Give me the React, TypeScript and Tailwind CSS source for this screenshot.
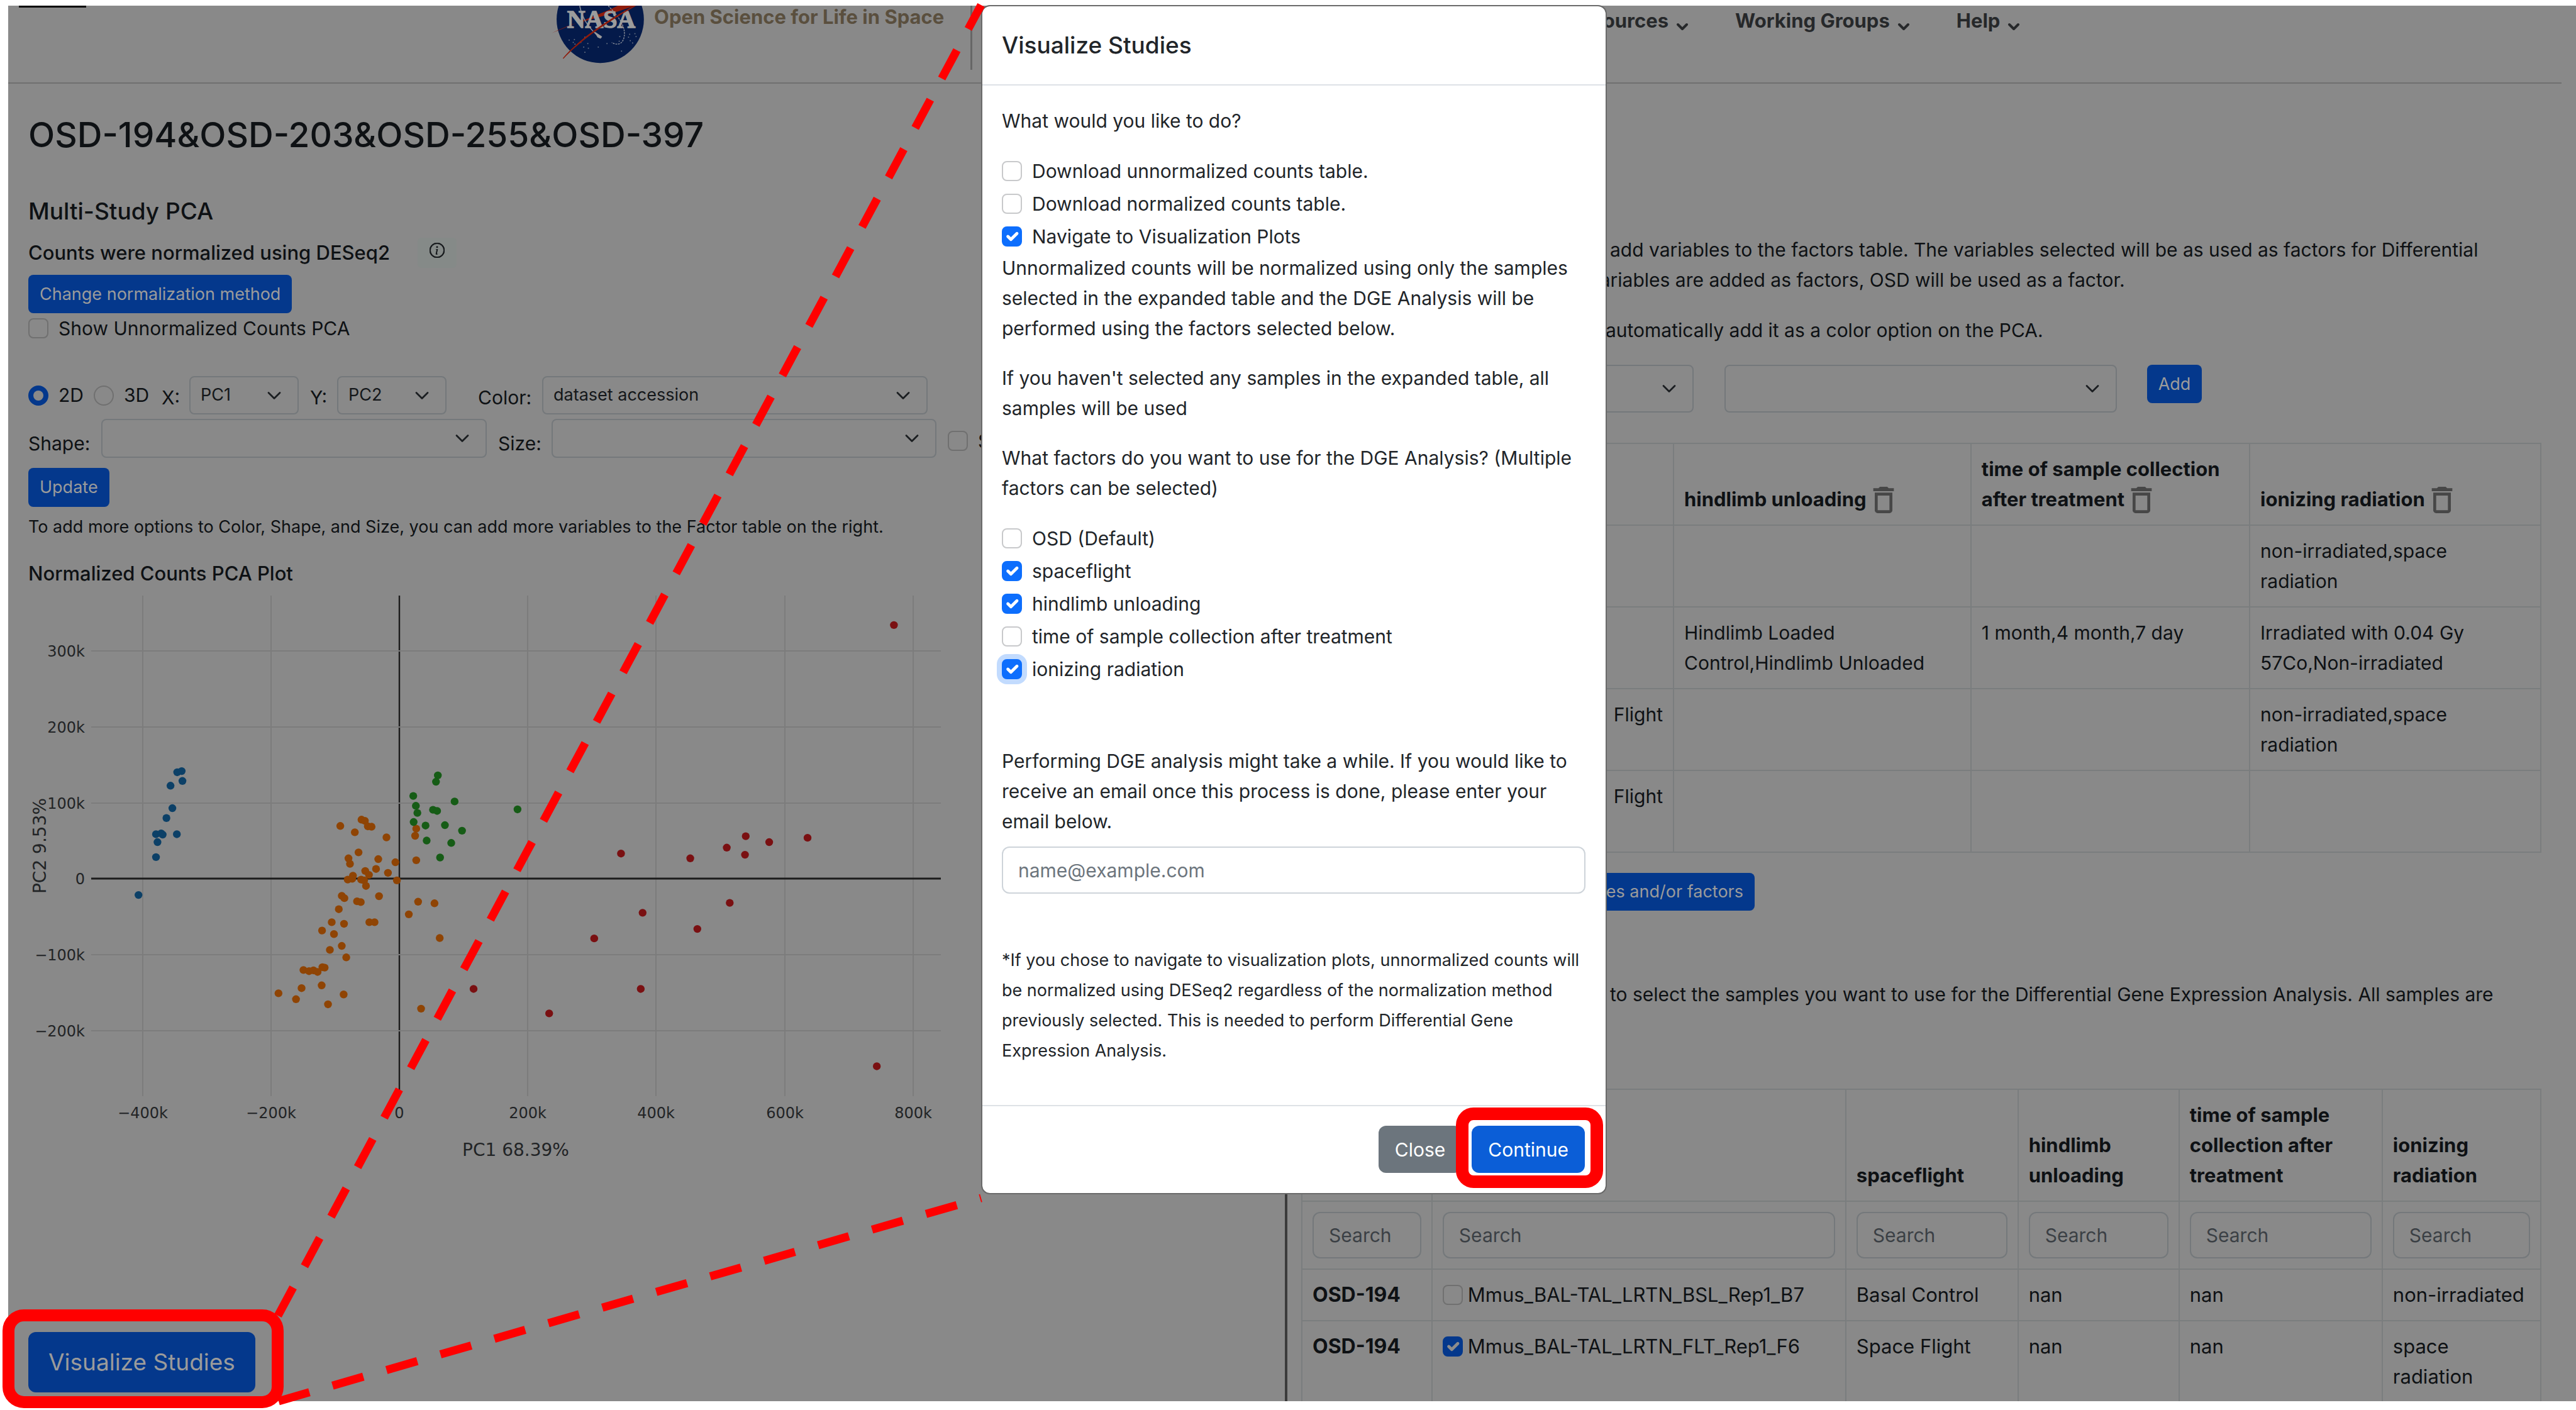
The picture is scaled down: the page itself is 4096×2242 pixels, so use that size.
import React from "react";

type Pt = [number, number];

const BLUE: Pt[] = [
  [476, 537], [488, 534], [490, 559], [458, 571], [463, 628], [447, 653], [419, 694], [433, 692],
  [437, 695], [475, 694], [423, 714], [419, 752], [372, 848],
];
const ORANGE: Pt[] = [
  [914, 673], [971, 657], [980, 660], [988, 674], [998, 675], [953, 689], [1038, 702], [963, 740],
  [936, 755], [940, 769], [1016, 757], [1062, 765], [1010, 782], [981, 787], [991, 797], [1042, 792],
  [948, 799], [934, 809], [946, 807], [970, 809], [978, 811], [1066, 811], [983, 825], [918, 850],
  [925, 856], [1018, 851], [959, 864], [969, 866], [910, 884], [891, 917], [924, 921], [992, 917],
  [1006, 917], [865, 938], [897, 947], [918, 977], [886, 987], [930, 1006], [872, 1032], [866, 1031],
  [815, 1038], [830, 1041], [842, 1039], [853, 1043], [864, 1077], [810, 1084], [748, 1097], [795, 1112],
  [923, 1100], [881, 1125], [1118, 680], [1115, 698], [1118, 760], [1123, 865], [1167, 869], [1098, 897],
  [1181, 957], [1131, 1136],
];
const GREEN: Pt[] = [
  [1176, 545], [1171, 561], [1110, 597], [1221, 611], [1117, 622], [1121, 640], [1163, 632], [1174, 635],
  [1390, 631], [1111, 663], [1143, 672], [1195, 671], [1241, 685], [1146, 710], [1212, 716], [1182, 753],
];
const RED: Pt[] = [
  [2401, 164], [2003, 699], [2169, 703], [2066, 714], [1952, 728], [2001, 746], [1668, 743], [1854, 755],
  [1726, 893], [1960, 868], [1873, 934], [1596, 958], [1721, 1086], [1475, 1148], [2355, 1282], [1272, 1086],
];
const SERIES: { name: string; fill: string; points: Pt[] }[] = [
  { name: "OSD-203", fill: "#8f4404", points: ORANGE },
  { name: "OSD-194", fill: "#0c4067", points: BLUE },
  { name: "OSD-255", fill: "#165c16", points: GREEN },
  { name: "OSD-397", fill: "#7a1012", points: RED },
];
const px = (u: number) => u * 0.592;
const py = (v: number) => 891 + v * 0.6275;

function PcaPlot() {
  const xs: [number, string][] = [
    [227, "−400k"], [431, "−200k"], [635, "0"], [839, "200k"], [1043, "400k"], [1248, "600k"], [1452, "800k"],
  ];
  const ys: [number, string][] = [
    [1035, "300k"], [1156, "200k"], [1277, "100k"], [1397, "0"], [1518, "−100k"], [1639, "−200k"],
  ];
  return (
    <svg viewBox="45 932 1500 936" className="block h-[936px] w-[1500px]" role="img" aria-label="PCA plot" fontFamily='"DejaVu Sans", sans-serif' fill="#222426">
      {xs.map(([x, t]) => (
        <g key={t}>
          <line x1={x} x2={x} y1="947" y2="1743" stroke={t === "0" ? "#1c1c1c" : "#7c7c7c"} strokeWidth={t === "0" ? 2.4 : 2} />
          <text x={x} y="1778" fontSize="24" textAnchor="middle">{t}</text>
        </g>
      ))}
      {ys.map(([y, t]) => (
        <g key={t}>
          <line x1="145" x2="1496" y1={y} y2={y} stroke={t === "0" ? "#1c1c1c" : "#7c7c7c"} strokeWidth={t === "0" ? 2.8 : 2} />
          <text x="135" y={y + 9} fontSize="24" textAnchor="end">{t}</text>
        </g>
      ))}
      {SERIES.map((s) => (
        <g key={s.name} fill={s.fill}>
          {s.points.map(([u, v]) => (
            <circle key={`${u}-${v}`} cx={px(u)} cy={py(v)} r="6.2" />
          ))}
        </g>
      ))}
      <text x="820" y="1838" fontSize="28" textAnchor="middle">PC1 68.39%</text>
      <text transform="translate(73 1345) rotate(-90)" fontSize="28" textAnchor="middle">PC2 9.53%</text>
    </svg>
  );
}

function Nasa() {
  return (
    <svg viewBox="0 0 200 120" className="block h-[111px] w-[186px]" role="img" aria-label="NASA">
      <defs>
        <clipPath id="top-edge"><rect x="0" y="9.6" width="200" height="110.4" /></clipPath>
      </defs>
      <g clipPath="url(#top-edge)">
        <circle cx="98.3" cy="33.3" r="75" fill="#041a4a" />
        <path d="M15 57 C55 40 105 22 130 9 L160 9 C130 20 90 32 61 39 C42 44 28 51 15 57Z" fill="#8f1c0c" />
        <path d="M63 10 C67 30 76 46 98 65" fill="none" stroke="#8d929c" strokeWidth="1.6" />
        <path d="M89 55 L101 63 L99 66 L94 64Z" fill="#9a9a9a" stroke="#9a9a9a" strokeWidth="1" />
        <path d="M112 10 C132 30 145 50 138 68 C134 78 124 77 118 73" fill="none" stroke="#8d929c" strokeWidth="1.5" strokeDasharray="3 1.5" />
        <g fill="#6c7586">
          {[[44, 68], [51, 72], [53, 67], [54, 75], [71, 63], [64, 72], [69, 80], [77, 82], [76, 74], [71, 89], [94, 80], [109, 74], [134, 87], [131, 62], [130, 70], [148, 58], [157, 57], [159, 62], [149, 69], [153, 73], [146, 63]].map(([x, y]) => (
            <rect key={`${x}-${y}`} x={x} y={y} width="1.8" height="1.8" />
          ))}
        </g>
      </g>
      <text x="100" y="48" textAnchor="middle" fontFamily='"Liberation Serif", serif' fontWeight="700" fontSize="43" fill="#9c9c9c" stroke="#9c9c9c" strokeWidth="1.6">NASA</text>
      <path d="M35 101 C60 74 100 44 160 10 L156 10 C100 40 60 70 34 100Z" fill="#8f1c0c" />
    </svg>
  );
}

function Chevron({ className }: { className: string }) {
  return (
    <svg viewBox="0 0 22 13" className={className} fill="none" stroke="#1b1e21" strokeWidth="2.8" strokeLinecap="round" strokeLinejoin="round" aria-hidden="true">
      <path d="M2 2 L11 11 L20 2" />
    </svg>
  );
}

function Select({ label, value, className }: { label: string; value?: string; className: string }) {
  return (
    <span className={`relative block shrink-0 ${className}`}>
      <select aria-label={label} className="h-full w-full appearance-none rounded-[8px] border-2 border-[#74787b] bg-transparent pl-4 text-[27px] text-[#14171a]">
        <option>{value ?? ""}</option>
      </select>
      <Chevron className="pointer-events-none absolute top-1/2 right-[28px] h-[13px] w-[22px] -translate-y-1/2" />
    </span>
  );
}

function Tick({ id, checked, dim, focus, label, radio }: { id: string; checked?: boolean; dim?: boolean; focus?: boolean; label?: string; radio?: boolean }) {
  const idle = dim ? "border-[#707070] bg-transparent" : "border-[#c8c9cb] bg-white";
  const on = dim ? "checked:border-[#04388c] checked:bg-[#04388c]" : "checked:border-[#0d6efd] checked:bg-[#0d6efd]";
  const ring = focus ? "ring-8 ring-[#c2dbfe]" : "";
  const shape = radio ? "rounded-full" : "rounded-[8px]";
  return (
    <span className="grid size-8 shrink-0 place-items-center">
      <input
        id={id}
        type={radio ? "radio" : "checkbox"}
        name={radio ? "dimension" : id}
        defaultChecked={checked}
        aria-label={label}
        className={`col-start-1 row-start-1 size-8 appearance-none border-2 ${shape} ${idle} ${on} ${ring}`}
      />
      {checked && !radio && (
        <svg viewBox="0 0 20 20" className="pointer-events-none col-start-1 row-start-1 size-8" fill="none" stroke={dim ? "#8c8c8c" : "#fff"} strokeWidth="3" strokeLinecap="round" strokeLinejoin="round" aria-hidden="true">
          <path d="M6 10l3 3 6-6" />
        </svg>
      )}
      {checked && radio && <span className="pointer-events-none col-start-1 row-start-1 size-4 rounded-full bg-[#898989]" />}
    </span>
  );
}

function Trash({ label }: { label: string }) {
  return (
    <button type="button" aria-label={label} className="ml-[10px] inline-block align-bottom">
      <svg viewBox="5 3 14 18" className="block h-[44px] w-[34px] pb-[2px]" fill="#474747" aria-hidden="true">
        <path d="M6 19c0 1.1.9 2 2 2h8c1.1 0 2-.9 2-2V7H6v12zM8 9h8v10H8V9zm7.5-5l-1-1h-5l-1 1H5v2h14V4h-3.5z" />
      </svg>
    </button>
  );
}

function NavItem({ children }: { children: string }) {
  return (
    <a href="#nav" className="flex items-center gap-3 text-[31px] leading-[48px] font-bold text-[#26282a]">
      {children}
      <svg viewBox="0 0 20 14" className="mt-5 h-[14px] w-5" fill="none" stroke="#26282a" strokeWidth="4" strokeLinecap="round" strokeLinejoin="round" aria-hidden="true">
        <path d="M3 3 L10 10 L17 3" />
      </svg>
    </a>
  );
}

const BTN = "rounded-[8px] bg-[#04388c] text-[27px] leading-[40px] text-[#9b9b9b]";
const CELL = "border-2 border-[#7a7d7e] px-4 py-4";

function Header() {
  return (
    <header className="h-[124px] shrink-0">
      <div className="flex h-[122px] items-start">
        <div className="ml-[17px] h-[3px] w-[107px] bg-black" />
        <div className="-mt-[9px] ml-[726px]"><Nasa /></div>
        <span className="-mt-1 -ml-[9px] w-[503px] shrink-0 text-[31px] leading-[44px] font-bold text-[#5a4f3e]">Open Science for Life in Space</span>
        <span className="h-[102px] w-[3px] bg-[#666]" />
        <nav className="ml-[947px] flex gap-[74px]" aria-label="Main">
          <NavItem>Resources</NavItem>
          <NavItem>Working Groups</NavItem>
          <NavItem>Help</NavItem>
        </nav>
      </div>
      <div className="mr-[23px] h-[2px] bg-[#6f6f6f]" />
    </header>
  );
}

function LeftPanel() {
  return (
    <section className="flex flex-col items-start overflow-hidden pl-8">
      <h1 className="mt-12 text-[55px] leading-[66px] font-medium">OSD-194&amp;OSD-203&amp;OSD-255&amp;OSD-397</h1>
      <h2 className="mt-[65px] text-[37px] leading-[48px] font-medium">Multi-Study PCA</h2>
      <div className="mt-[19px] flex h-[45px] items-center gap-11">
        <h3 className="text-[31px] leading-[45px] font-medium">Counts were normalized using DESeq2</h3>
        <button type="button" aria-label="About normalization" className="grid h-[48px] w-[62px] place-items-center rounded-[6px] bg-[#858a88] pb-2">
          <svg viewBox="0 0 16 16" className="size-6" fill="#14171a" aria-hidden="true">
            <path d="M8 15A7 7 0 1 1 8 1a7 7 0 0 1 0 14m0 1A8 8 0 1 0 8 0a8 8 0 0 0 0 16" stroke="#14171a" strokeWidth=".5" />
            <path d="m8.930 6.588-2.290.287-.082.380.450.083c.294.070.352.176.288.469l-.738 3.468c-.194.897.105 1.319.808 1.319.545 0 1.178-.252 1.465-.598l.088-.416c-.200.176-.492.246-.686.246-.275 0-.375-.193-.304-.533zM9 4.500a1 1 0 1 1-2 0 1 1 0 0 1 2 0" />
          </svg>
        </button>
      </div>
      <button type="button" className={`mt-[13px] h-[61px] px-[18px] ${BTN}`}>Change normalization method</button>
      <div className="flex h-12 items-center gap-4">
        <Tick id="unnorm" dim />
        <label htmlFor="unnorm" className="text-[30px] leading-[48px]">Show Unnormalized Counts PCA</label>
      </div>
      <div className="mt-[52px] flex h-[61px] items-center text-[30px]">
        <Tick id="d2" radio checked dim />
        <label htmlFor="d2" className="ml-4 w-[56px]">2D</label>
        <Tick id="d3" radio dim />
        <label htmlFor="d3" className="ml-4 w-[60px]">3D</label>
        <span className="w-[44px] pt-2">X:</span>
        <Select label="X" value="PC1" className="h-[61px] w-[174px]" />
        <span className="ml-[18px] w-[43px] pt-2">Y:</span>
        <Select label="Y" value="PC2" className="h-[61px] w-[174px]" />
        <span className="ml-[50px] w-[102px] pt-2">Color:</span>
        <Select label="Color" value="dataset accession" className="h-[61px] w-[613px]" />
      </div>
      <div className="mt-[7px] flex h-[62px] items-center text-[30px]">
        <span className="w-[116px] pt-4">Shape:</span>
        <Select label="Shape" className="h-[62px] w-[613px]" />
        <span className="ml-[18px] w-[85px] pt-4">Size:</span>
        <Select label="Size" className="h-[62px] w-[612px]" />
        <span className="ml-[18px] flex shrink-0 items-center gap-4 pt-2">
          <Tick id="show" dim label="Show" />
          <span>S</span>
        </span>
      </div>
      <button type="button" className={`mt-4 h-[62px] px-[18px] ${BTN}`}>Update</button>
      <p className="mt-2 text-[27px] leading-[48px]">To add more options to Color, Shape, and Size, you can add more variables to the Factor table on the right.</p>
      <h3 className="mt-[30px] text-[31px] leading-[40px] font-medium">Normalized Counts PCA Plot</h3>
      <PcaPlot />
      <button type="button" className="mt-[250px] h-[96px] rounded-[12px] bg-[#04388c] px-8 text-[37px] text-[#9b9b9b]">Visualize Studies</button>
    </section>
  );
}

function FactorsTable() {
  const rows: string[][] = [
    ["", "", "", "non-irradiated,space radiation"],
    ["", "Hindlimb Loaded Control,Hindlimb Unloaded", "1 month,4 month,7 day", "Irradiated with 0.04 Gy 57Co,Non-irradiated"],
    ["Flight", "", "", "non-irradiated,space radiation"],
    ["Flight", "", "", ""],
  ];
  return (
    <table className="mt-12 w-full table-fixed border-collapse text-[30px] leading-[48px]">
      <colgroup>
        <col className="w-[30%]" />
        <col className="w-[24%]" />
        <col className="w-[22.5%]" />
        <col className="w-[23.5%]" />
      </colgroup>
      <thead>
        <tr className="h-[130px] text-left align-bottom text-[31px]">
          <th className={CELL} />
          <th className={CELL}>hindlimb unloading<Trash label="Remove hindlimb unloading" /></th>
          <th className={CELL}>time of sample collection after treatment<Trash label="Remove time of sample collection" /></th>
          <th className={CELL}>ionizing radiation<Trash label="Remove ionizing radiation" /></th>
        </tr>
      </thead>
      <tbody>
        {rows.map((r, i) => (
          <tr key={i} className="h-[130px] align-top">
            {r.map((c, j) => (
              <td key={j} className={`${CELL} ${j === 0 ? "text-right" : ""} ${j === 3 ? "pr-[40px]" : ""}`}>{c}</td>
            ))}
          </tr>
        ))}
      </tbody>
    </table>
  );
}

function SamplesTable() {
  const heads = ["", "", "spaceflight", "hindlimb unloading", "time of sample collection after treatment", "ionizing radiation"];
  const rows = [
    { name: "Mmus_BAL-TAL_LRTN_BSL_Rep1_B7", on: false, cells: ["Basal Control", "nan", "nan", "non-irradiated"] },
    { name: "Mmus_BAL-TAL_LRTN_FLT_Rep1_F6", on: true, cells: ["Space Flight", "nan", "nan", "space radiation"] },
  ];
  return (
    <table className="mt-[126px] w-full table-fixed border-collapse text-[31px] leading-[48px]">
      <colgroup>
        <col className="w-[10.5%]" />
        <col className="w-[33.4%]" />
        <col className="w-[13.9%]" />
        <col className="w-[13%]" />
        <col className="w-[16.4%]" />
        <col className="w-[12.8%]" />
      </colgroup>
      <thead>
        <tr className="text-left align-bottom">
          {heads.map((h, i) => <th key={i} className={CELL}>{h}</th>)}
        </tr>
        <tr>
          {heads.map((h, i) => (
            <td key={i} className={`${CELL} text-[30px]`}>
              <input type="text" aria-label={`Search ${h || "column"}`} placeholder="Search" className="block h-[74px] w-full rounded-[12px] border-2 border-[#74787b] bg-transparent px-6 placeholder:text-[#3b4045]" />
            </td>
          ))}
        </tr>
      </thead>
      <tbody>
        {rows.map((r) => (
          <tr key={r.name} className="align-top">
            <th className={`${CELL} text-left text-[32px]`}>OSD-194</th>
            <td className={CELL}>
              <span className="flex items-center gap-2">
                <Tick id={r.name} dim checked={r.on} />
                <label htmlFor={r.name}>{r.name}</label>
              </span>
            </td>
            {r.cells.map((c, i) => <td key={i} className={CELL}>{c}</td>)}
          </tr>
        ))}
      </tbody>
    </table>
  );
}

function RightPanel() {
  return (
    <section className="flex flex-col items-start border-l-4 border-[#3b3b3b] pr-[55px] pl-[22px]">
      <p className="mt-[240px] ml-[491px] text-[30px] leading-[48px] whitespace-nowrap">add variables to the factors table. The variables selected will be as used as factors for Differential</p>
      <p className="ml-[458px] text-[30px] leading-[48px]">variables are added as factors, OSD will be used as a factor.</p>
      <p className="mt-8 ml-[484px] text-[30px] leading-[48px]">automatically add it as a color option on the PCA.</p>
      <div className="mt-[31px] flex">
        <Select label="Study" className="h-[76px] w-[624px]" />
        <Select label="Variable" className="ml-[49px] h-[76px] w-[624px]" />
        <button type="button" className={`ml-12 h-[61px] w-[87px] ${BTN}`}>Add</button>
      </div>
      <FactorsTable />
      <button type="button" className={`mt-[32px] h-[60px] w-[721px] px-[18px] text-right ${BTN}`}>samples and/or factors</button>
      <p className="mt-[109px] ml-[491px] text-[30px] leading-[48px] whitespace-nowrap">to select the samples you want to use for the Differential Gene Expression Analysis. All samples are</p>
      <SamplesTable />
    </section>
  );
}

function Option({ id, label, checked, focus }: { id: string; label: string; checked?: boolean; focus?: boolean }) {
  return (
    <div className="flex h-[52px] items-center gap-4">
      <Tick id={id} checked={checked} focus={focus} />
      <label htmlFor={id}>{label}</label>
    </div>
  );
}

function Modal() {
  return (
    <div role="dialog" aria-label="Visualize Studies" className="absolute top-[10px] left-[1562px] flex w-[991px] flex-col rounded-[12px] bg-white text-[30px] leading-[48px] text-[#212529] outline-2 outline-[#6a6a6a]">
      <div className="border-b-2 border-[#dee2e6] px-[31px] pt-[38px] pb-[38px]">
        <h2 className="text-[37px] font-medium">Visualize Studies</h2>
      </div>
      <div className="pt-8 pr-8 pl-[31px]">
        <p>What would you like to do?</p>
        <div className="mt-[30px]">
          <Option id="dl-un" label="Download unnormalized counts table." />
          <Option id="dl-n" label="Download normalized counts table." />
          <Option id="nav-v" label="Navigate to Visualization Plots" checked />
        </div>
        <p>Unnormalized counts will be normalized using only the samples selected in the expanded table and the DGE Analysis will be performed using the factors selected below.</p>
        <p className="mt-[31px]">If you haven't selected any samples in the expanded table, all samples will be used</p>
        <p className="mt-[31px]">What factors do you want to use for the DGE Analysis? (Multiple factors can be selected)</p>
        <div className="mt-[30px]">
          <Option id="f-osd" label="OSD (Default)" />
          <Option id="f-sf" label="spaceflight" checked />
          <Option id="f-hu" label="hindlimb unloading" checked />
          <Option id="f-t" label="time of sample collection after treatment" />
          <Option id="f-ir" label="ionizing radiation" checked focus />
        </div>
        <label htmlFor="email" className="mt-[96px] block">Performing DGE analysis might take a while. If you would like to receive an email once this process is done, please enter your email below.</label>
        <input id="email" type="email" placeholder="name@example.com" className="mt-4 block h-[75px] w-full rounded-[12px] border-2 border-[#ced4da] px-6 placeholder:text-[#6c757d]" />
        <p className="mt-[82px] text-[27px]">*If you chose to navigate to visualization plots, unnormalized counts will be normalized using DESeq2 regardless of the normalization method previously selected. This is needed to perform Differential Gene Expression Analysis.</p>
      </div>
      <div className="mt-[62px] flex justify-end gap-4 border-t-2 border-[#dee2e6] pt-[31px] pr-[33px] pb-[32px] text-white">
        <button type="button" className="h-[75px] rounded-[12px] bg-[#6c757d] px-[26px]">Close</button>
        <button type="button" className="h-[75px] rounded-[12px] bg-[#0b5ed7] px-[26px]">Continue</button>
      </div>
    </div>
  );
}

export default function App() {
  return (
    <div className="relative flex h-screen flex-col overflow-hidden bg-white pt-[9px] pb-[14px] pl-[13px] font-['Inter',sans-serif]">
      <div className="flex min-h-0 flex-1 flex-col overflow-hidden bg-[#898989] text-[#0e1114]">
        <Header />
        <main className="grid min-h-0 flex-1 grid-cols-[2030fr_2053fr] overflow-hidden">
          <LeftPanel />
          <RightPanel />
        </main>
      </div>
      <Modal />
      <svg viewBox="0 0 1600 2242" className="pointer-events-none absolute top-0 left-0 h-[2242px] w-[1600px]" fill="none" stroke="#ff0000" strokeWidth="13" aria-hidden="true">
        <path d="M442 2092 L1560 8" strokeDasharray="51 38.300" />
        <path d="M443 2228 L1560 1905" strokeDasharray="51 38.300" />
      </svg>
      <div className="pointer-events-none absolute top-[2082px] left-[4px] h-[157px] w-[447px] rounded-[34px] border-[19px] border-[#ff0000]" />
      <div className="pointer-events-none absolute top-[1761px] left-[2315px] h-[128px] w-[234px] rounded-[28px] border-[20px] border-[#ff0000]" />
    </div>
  );
}
